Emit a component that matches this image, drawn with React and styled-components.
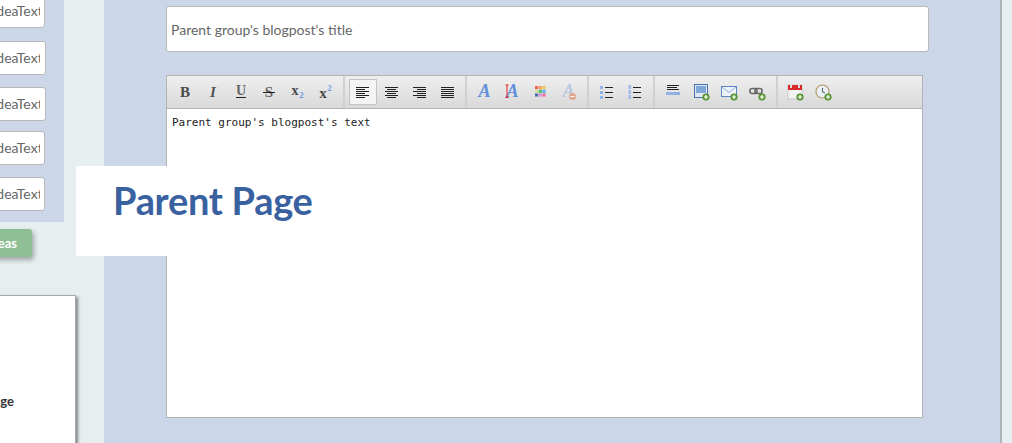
import React from "react";
import styled, { createGlobalStyle } from "styled-components";

const GlobalStyle = createGlobalStyle`
    html, body {
        margin: 0;
        padding: 0;
        background: #e6eef0;
        font-family: "Lato", "Liberation Sans", sans-serif;
    }
`;

const Page = styled.div`
    position: relative;
    display: flex;
    width: 1012px;
    height: 443px;
    overflow: hidden;
    background: #e6eef0;
`;

const Sidebar = styled.aside`
    width: 104px;
    flex: none;
`;

const IdeaPanel = styled.div`
    width: 64px;
    height: 222px;
    overflow: hidden;
    background: #cbd7e8;
    padding-top: 1px;
    box-sizing: border-box;
`;

const IdeaInput = styled.div`
    box-sizing: border-box;
    width: ${(p) => p.$width}px;
    height: 34px;
    margin-left: -100px;
    margin-top: ${(p) => p.$gap}px;
    padding-left: 92px;
    background: #fff;
    border: 1px solid #b8b8b8;
    border-radius: 3px;
    color: #666;
    font-size: 14px;
    line-height: 32px;
    white-space: nowrap;
    overflow: hidden;
`;

const IdeaClip = styled.div`
    width: 47px;
    overflow: hidden;
`;

const AddButton = styled.div`
    width: 132px;
    height: 28px;
    margin: 7px 0 0 -100px;
    background: #8fbf95;
    border-radius: 3px;
    box-shadow: 2px 3px 5px rgba(0, 0, 0, 0.3);
    color: #fff;
    font-size: 13px;
    font-weight: 700;
    line-height: 28px;
    text-align: right;
    padding-right: 15px;
    box-sizing: border-box;
`;

const SideCard = styled.div`
    box-sizing: border-box;
    width: 176px;
    height: 160px;
    margin: 38px 0 0 -100px;
    padding: 97px 61px 0 0;
    background: #fff;
    border: 1px solid #a8a8a8;
    box-shadow: 2px 2px 3px rgba(0, 0, 0, 0.45);
    color: #333;
    font-size: 13px;
    font-weight: 700;
    text-align: right;
`;

const Main = styled.main`
    box-sizing: border-box;
    width: 898px;
    height: 443px;
    flex: none;
    padding: 6px 0 0 62px;
    background: #cbd7e8;
    border-right: 2px solid #aeb4ba;
`;

const TitleInput = styled.div`
    box-sizing: border-box;
    width: 763px;
    height: 46px;
    padding-left: 4px;
    background: #fff;
    border: 1px solid #b8b8b8;
    border-radius: 3px;
    color: #666;
    font-size: 14px;
    line-height: 46px;
`;

const Editor = styled.div`
    box-sizing: border-box;
    width: 757px;
    height: 343px;
    margin-top: 23px;
    background: #fff;
    border: 1px solid #b4b4b4;
`;

const Toolbar = styled.div`
    display: flex;
    height: 32px;
    background: linear-gradient(#efefef, #d9d9d9);
    border-bottom: 1px solid #b4b4b4;
`;

const Group = styled.div`
    display: flex;
    align-items: center;
    box-sizing: border-box;
    width: ${(p) => p.$width}px;
    padding-left: ${(p) => p.$pad}px;
    border-right: 2px solid #d0d0d0;
    &:last-child {
        border-right: none;
    }
`;

const Tool = styled.div`
    box-sizing: border-box;
    display: flex;
    align-items: center;
    justify-content: center;
    width: 28px;
    height: 26px;
    background: ${(p) => (p.$active ? "#f4f4f4" : "transparent")};
    border: ${(p) => (p.$active ? "1px solid #c4c4c4" : "none")};
`;

const EditorBody = styled.div`
    padding: 6px 5px;
    color: #222;
    font-family: "DejaVu Sans Mono", "Liberation Mono", monospace;
    font-size: 11px;
    line-height: 15px;
`;

const PageLabel = styled.div`
    position: absolute;
    left: 76px;
    top: 166px;
    box-sizing: border-box;
    width: 260px;
    height: 90px;
    padding: 10px 0 0 37px;
    background: #fff;
    color: #3a619f;
    font-size: 38px;
    font-weight: 700;
    line-height: 48px;
    letter-spacing: -0.3px;
`;

const Icon = ({ children }) => (
    <svg width="18" height="18" viewBox="0 0 18 18">
        {children}
    </svg>
);

const Letter = ({ x = 9, y = 14, size = 15, italic, fill = "#4a4a4a", children }) => (
    <text
        x={x}
        y={y}
        fontSize={size}
        fontWeight="700"
        fontStyle={italic ? "italic" : "normal"}
        fontFamily="Liberation Serif, serif"
        textAnchor="middle"
        fill={fill}
    >
        {children}
    </text>
);

const Lines = ({ rows, color = "#222" }) =>
    rows.map(([x, w], i) => (
        <rect key={i} x={x} y={4 + i * 2} width={w} height="1" fill={color} />
    ));

const Plus = () => (
    <g>
        <circle cx="14" cy="14" r="3.3" fill="#5f9e37" stroke="#3f7a22" strokeWidth="0.5" />
        <path d="M14 12v4M12 14h4" stroke="#fff" strokeWidth="1.2" />
    </g>
);

const BlueA = ({ opacity = 1 }) => (
    <g opacity={opacity}>
        <Letter x={9.5} y={14} size={18} italic fill="#5f8fdc">
            A
        </Letter>
    </g>
);

const ListIcon = ({ kind }) => (
    <Icon>
        {[3, 8, 13].map((y) =>
            kind === "bullet" ? (
                <rect key={y} x="3" y={y} width="3" height="3" fill="#8fb2e8" />
            ) : (
                <rect key={y} x="3.5" y={y - 1} width="2.5" height="4" fill="#9dbcec" />
            )
        )}
        {[4, 9, 14].map((y) => (
            <rect key={y} x="8" y={y} width="8" height="1" fill="#222" />
        ))}
    </Icon>
);

const swatches = ["#f0645a", "#f5a05a", "#ecc85a", "#cfe3a0", "#50c060", "#5aaef0", "#4a70b0", "#d890d8", "#f070a0"];

const toolGroups = [
    {
        width: 178,
        pad: 4,
        tools: [
            <Icon><Letter>B</Letter></Icon>,
            <Icon><Letter italic fill="#555">I</Letter></Icon>,
            <Icon>
                <Letter y={12} size={14} fill="#666">U</Letter>
                <rect x="4" y="14" width="10" height="1" fill="#222" />
            </Icon>,
            <Icon>
                <Letter size={15} fill="#666">S</Letter>
                <rect x="3" y="9" width="12" height="1" fill="#222" />
            </Icon>,
            <Icon>
                <Letter x={7} y={12} size={14}>x</Letter>
                <Letter x={13.5} y={15} size={9} fill="#6b9be0">2</Letter>
            </Icon>,
            <Icon>
                <Letter x={7} y={15} size={15}>x</Letter>
                <Letter x={13.5} y={8} size={9} fill="#6b9be0">2</Letter>
            </Icon>,
        ],
    },
    {
        width: 122,
        pad: 4,
        tools: [
            <Icon><Lines rows={[[2, 13], [2, 9], [2, 13], [2, 9], [2, 13], [2, 9]]} /></Icon>,
            <Icon><Lines rows={[[3, 13], [5, 9], [3, 13], [5, 9], [3, 13], [5, 9]]} /></Icon>,
            <Icon><Lines rows={[[3, 13], [7, 9], [3, 13], [7, 9], [3, 13], [7, 9]]} /></Icon>,
            <Icon><Lines rows={[[3, 13], [3, 13], [3, 13], [3, 13], [3, 13], [3, 13]]} /></Icon>,
        ],
    },
    {
        width: 122,
        pad: 3,
        tools: [
            <Icon><BlueA /></Icon>,
            <Icon>
                <BlueA />
                <path d="M4 2v12.5M2.5 2h3M2.5 14.5h3" stroke="#e02020" strokeWidth="1" fill="none" />
            </Icon>,
            <Icon>
                {swatches.map((c, i) => (
                    <rect key={c} x={4 + (i % 3) * 3.7} y={3 + Math.floor(i / 3) * 3.7} width="3.2" height="3.2" fill={c} />
                ))}
            </Icon>,
            <Icon>
                <BlueA opacity={0.35} />
                <circle cx="13.5" cy="13.5" r="3.5" fill="#e0a890" />
                <rect x="11.5" y="13" width="4" height="1" fill="#fff" />
            </Icon>,
        ],
    },
    {
        width: 66,
        pad: 3,
        tools: [<ListIcon kind="bullet" />, <ListIcon kind="number" />],
    },
    {
        width: 123,
        pad: 4,
        tools: [
            <Icon>
                <rect x="3" y="2" width="12" height="1" fill="#222" />
                <rect x="3" y="4" width="10" height="1" fill="#222" />
                <rect x="3" y="6" width="12" height="1" fill="#222" />
                <rect x="2" y="9" width="14" height="3" fill="#8fb2e6" />
            </Icon>,
            <Icon>
                <rect x="2.5" y="1.5" width="13" height="13" fill="#dfe8f2" stroke="#4a74b0" />
                <rect x="4" y="3" width="10" height="7" fill="#7fa8d8" />
                <Plus />
            </Icon>,
            <Icon>
                <rect x="1.5" y="3.5" width="15" height="10" fill="#eef3fa" stroke="#5a86c4" />
                <path d="M2 4l7 5.5L16 4" stroke="#8fb2e6" fill="none" />
                <Plus />
            </Icon>,
            <Icon>
                <rect x="2" y="5.5" width="7" height="5" rx="2" fill="none" stroke="#666" strokeWidth="1.6" />
                <rect x="7" y="5.5" width="7" height="5" rx="2" fill="none" stroke="#666" strokeWidth="1.6" />
                <Plus />
            </Icon>,
        ],
    },
    {
        width: 70,
        pad: 3,
        tools: [
            <Icon>
                <rect x="2" y="2" width="14" height="14" fill="#f4f4f4" stroke="#aaa" strokeWidth="0.5" />
                <rect x="2" y="2" width="14" height="5" fill="#d82c2c" />
                <rect x="4" y="1" width="2" height="4" fill="#ddd" />
                <rect x="12" y="1" width="2" height="4" fill="#ddd" />
                <Plus />
            </Icon>,
            <Icon>
                <circle cx="8.5" cy="8.5" r="6.5" fill="#e8f0f8" stroke="#b89868" strokeWidth="1.2" />
                <path d="M8.5 5v4l2.5 1" stroke="#555" fill="none" />
                <Plus />
            </Icon>,
        ],
    },
];

const ideaRows = [
    { width: 145, gap: -7 },
    { width: 146, gap: 13 },
    { width: 146, gap: 12 },
    { width: 145, gap: 10 },
    { width: 145, gap: 12 },
];

const App = () => {
    return (
        <Page>
            <GlobalStyle />
            <Sidebar>
                <IdeaPanel>
                    {ideaRows.map((row, i) => (
                        <IdeaInput key={i} $width={row.width} $gap={row.gap}>
                            <IdeaClip>ideaText</IdeaClip>
                        </IdeaInput>
                    ))}
                </IdeaPanel>
                <AddButton>Add ideas</AddButton>
                <SideCard>Parent Page</SideCard>
            </Sidebar>
            <Main>
                <TitleInput>Parent group's blogpost's title</TitleInput>
                <Editor>
                    <Toolbar>
                        {toolGroups.map((group, i) => (
                            <Group key={i} $width={group.width} $pad={group.pad}>
                                {group.tools.map((tool, j) => (
                                    <Tool key={j} $active={i === 1 && j === 0}>
                                        {tool}
                                    </Tool>
                                ))}
                            </Group>
                        ))}
                    </Toolbar>
                    <EditorBody>Parent group's blogpost's text</EditorBody>
                </Editor>
            </Main>
            <PageLabel>Parent Page</PageLabel>
        </Page>
    );
};

export default App;
